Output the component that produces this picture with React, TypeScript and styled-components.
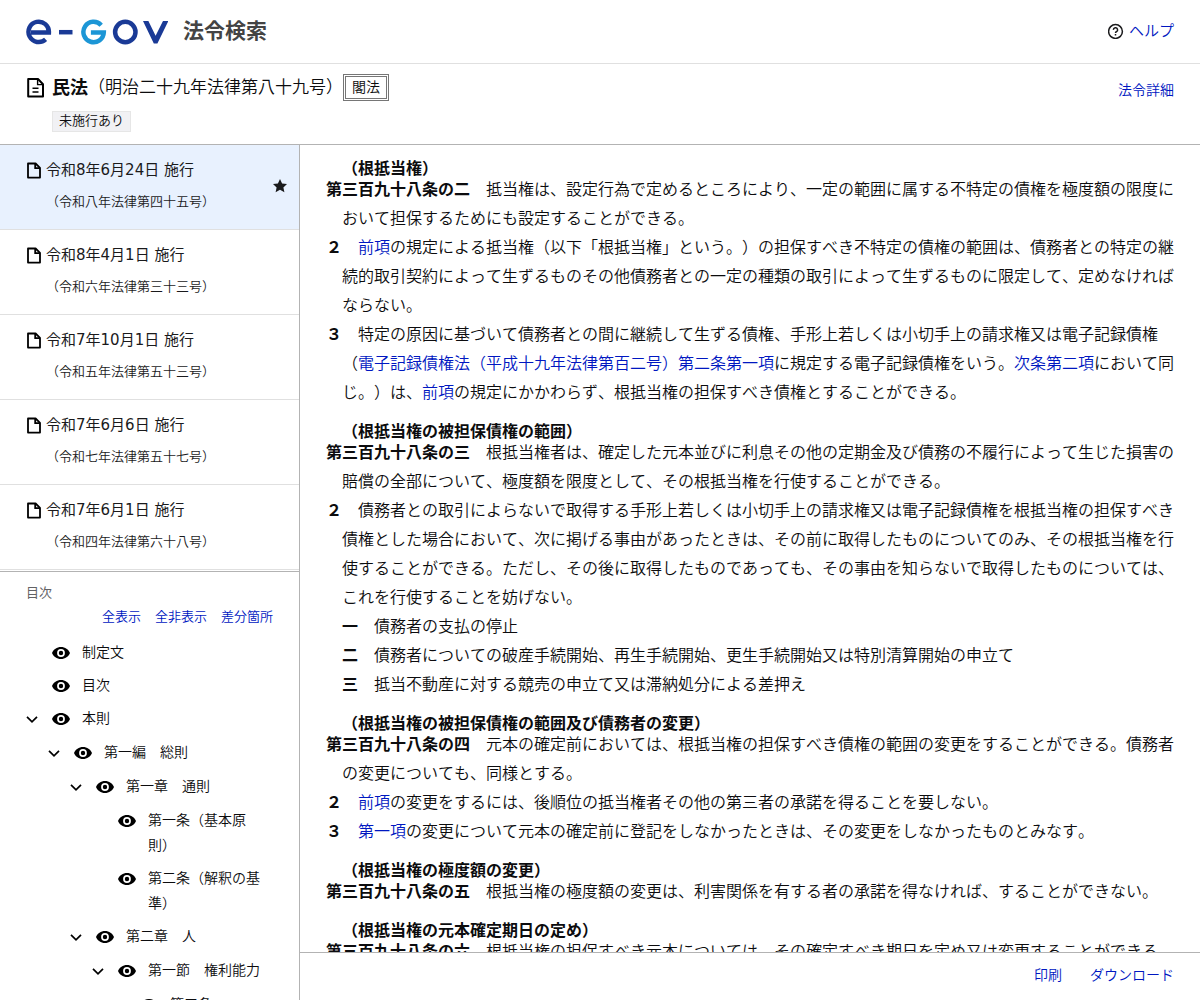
import React from "react";
import styled, { createGlobalStyle, css } from "styled-components";

const GlobalStyle = createGlobalStyle`
  *, *::before, *::after { box-sizing: border-box; }
  body {
    margin: 0;
    background: #fff;
    color: #0c0c0e;
    font-family: "DejaVu Sans", "Noto Sans CJK JP", sans-serif;
    font-size: 16px;
    font-weight: 350;
    font-kerning: none;
    text-spacing-trim: space-all;
  }
  h1, h2, h3, p, ul, ol { margin: 0; padding: 0; font-size: inherit; }
  ul, ol { list-style: none; }
  b { font-weight: 700; }
`;

const link = css`
  color: #0017c1;
  text-decoration: none;
`;

const Page = styled.div`
  display: flex;
  flex-direction: column;
  height: 100vh;
`;

const SiteHeader = styled.header`
  display: flex;
  align-items: center;
  justify-content: space-between;
  height: 64px;
  padding: 0 26px;
  border-bottom: 1px solid #e0e0e0;
`;

const Brand = styled.a`
  display: flex;
  align-items: center;
  gap: 15px;
  color: #444;
  font-size: 21px;
  font-weight: 700;
  line-height: 26px;
  text-decoration: none;
`;

const BrandText = styled.span`
  padding-bottom: 2px;
`;

const HelpLink = styled.a`
  ${link}
  display: flex;
  align-items: center;
  gap: 5px;
  padding-bottom: 2px;
  font-size: 15px;
  line-height: 24px;
`;

const LawBar = styled.section`
  display: flex;
  justify-content: space-between;
  align-items: flex-start;
  padding: 10px 26px 12px;
  border-bottom: 1px solid #b3b3b3;
`;

const LawTitle = styled.div`
  display: grid;
  grid-template-columns: 20px auto;
  column-gap: 6px;
  row-gap: 10px;
  align-items: center;
`;

const TitleLine = styled.div`
  display: flex;
  align-items: center;
  line-height: 27px;
  font-size: 17px;
`;

const LawName = styled.h1`
  font-size: 18px;
  font-weight: 700;
`;

const KindBadge = styled.span`
  padding: 0 6px;
  border: 3px double #767676;
  font-size: 14px;
  line-height: 21px;
`;

const Tag = styled.span`
  grid-column: 2;
  justify-self: start;
  padding: 0 6px 2px;
  border: 1px solid #e6e6e6;
  background: #f1f1f4;
  font-size: 13px;
  line-height: 17px;
`;

const TextLink = styled.a`
  ${link}
  font-size: 14px;
  line-height: 32px;
`;

const Body = styled.div`
  display: grid;
  grid-template-columns: 300px 1fr;
  flex: 1;
  min-height: 0;
`;

const Sidebar = styled.aside`
  display: flex;
  flex-direction: column;
  min-height: 0;
  border-right: 1px solid #b3b3b3;
`;

const Revisions = styled.ul`
  flex: none;
  padding-bottom: 1px;
  border-bottom: 1px solid #b3b3b3;
`;

const RevisionItem = styled.li<{ $current?: boolean }>`
  display: flex;
  align-items: center;
  justify-content: space-between;
  padding: 10px 12px 12px 26px;
  border-bottom: 1px solid #e0e0e0;
  background: ${(p) => (p.$current ? "#e8f1fe" : "#fff")};
`;

const RevisionLink = styled.a`
  display: grid;
  grid-template-columns: 16px auto;
  column-gap: 4px;
  row-gap: 2px;
  align-items: center;
  color: #1a1a1c;
  line-height: 30px;
  text-decoration: none;
`;

const RevisionDate = styled.span`
  font-size: 15px;
  font-weight: 400;
`;

const RevisionLaw = styled.span`
  grid-column: 2;
  font-size: 13px;
`;

const Toc = styled.nav`
  flex: 1;
  min-height: 0;
  padding: 9px 26px 0;
  overflow: hidden;
`;

const TocTitle = styled.h2`
  color: #626264;
  font-size: 13px;
  font-weight: 400;
  line-height: 24px;
`;

const TocActions = styled.div`
  display: flex;
  justify-content: flex-end;
  gap: 14px;
  margin-bottom: 7px;
`;

const TocButton = styled.button`
  ${link}
  padding: 0;
  border: 0;
  background: none;
  font-family: inherit;
  font-size: 13px;
  font-weight: inherit;
  line-height: 24px;
`;

const TocList = styled.ul`
  & & {
    padding-left: 22px;
    padding-top: 1px;
  }
`;

const TocRow = styled.div`
  display: grid;
  grid-template-columns: 12px 20px 1fr;
  column-gap: 12px;
  padding: 4px 0;
  font-size: 14px;
  line-height: 25px;
`;

const IconButton = styled.button`
  display: flex;
  align-items: center;
  justify-content: flex-end;
  height: 25px;
  padding: 0;
  border: 0;
  background: none;
  color: #000;
`;

const TocText = styled.a`
  color: inherit;
  text-decoration: none;
`;

const Content = styled.main`
  display: flex;
  flex-direction: column;
  min-width: 0;
  min-height: 0;
`;

const Articles = styled.div`
  flex: 1;
  min-height: 0;
  padding: 14px 24px 0 26px;
  overflow: hidden;
`;

const Article = styled.article`
  margin-bottom: 15px;
  line-height: 29px;
`;

const Caption = styled.h3`
  margin-bottom: -4px;
  padding-left: 16px;
  font-weight: 700;
  line-height: 20px;
`;

const Paragraph = styled.p<{ $item?: boolean }>`
  padding-left: ${(p) => (p.$item ? 32 : 16)}px;
  text-indent: -16px;
`;

const RefLink = styled.a`
  ${link}
`;

const Footer = styled.footer`
  display: flex;
  justify-content: flex-end;
  align-items: flex-start;
  gap: 28px;
  height: 48px;
  padding: 7px 26px;
  border-top: 1px solid #b3b3b3;
`;

const FooterButton = styled.button`
  ${link}
  padding: 0;
  border: 0;
  background: none;
  font-family: inherit;
  font-size: 14px;
  font-weight: inherit;
  line-height: 30px;
`;

const Logo = () => (
  <svg width="142" height="26" viewBox="0 0 142 26" fill="none" strokeWidth="4.5" role="img" aria-label="e-Gov">
    <path d="M5 13.4H22.9A10.2 10.2 0 1 0 19.6 20.4" stroke="#1a3a96" />
    <path d="M33 13.2H46.5" stroke="#1a3a96" />
    <path d="M74.8 6.2A10.2 10.2 0 1 0 77.4 13.4H64.5" stroke="#1c96d6" transform="translate(.4 0)" />
    <circle cx="99.3" cy="13" r="10.2" stroke="#1a3a96" />
    <path fill="#1a3a96" d="M117 2H122.4L129.6 16.8L137 2H142.4L131.4 24.4H127.8Z" />
  </svg>
);

const HelpIcon = () => (
  <svg width="16" height="16" viewBox="0 0 16 16" fill="none" stroke="#1a1a1c" strokeWidth="1.5" aria-hidden="true">
    <circle cx="7.5" cy="8.5" r="6.9" />
    <path d="M5.4 6.9A2.1 2.1 0 1 1 8.4 8.7C7.7 9.1 7.5 9.3 7.5 10" />
    <path d="M7.5 11V12.5" />
  </svg>
);

const LawIcon = () => (
  <svg width="20" height="22" viewBox="0 0 20 22" fill="none" stroke="#000" strokeWidth="2" aria-hidden="true">
    <path d="M2.2 2H12L17 7.2V19.6H2.2Z" strokeLinejoin="round" />
    <path d="M11.6 2V7.6H17" strokeWidth="1.4" />
    <path d="M6.5 11.3H12.5M6.5 15H12.5" strokeWidth="1.5" />
  </svg>
);

const FileIcon = () => (
  <svg width="16" height="18" viewBox="0 0 16 18" fill="none" stroke="#000" strokeWidth="1.8" aria-hidden="true">
    <path d="M2 2.5H9.6L14 6.9V16.6H2Z" strokeLinejoin="round" />
    <path d="M9.2 2.5V7.2H14" />
  </svg>
);

const StarIcon = () => (
  <svg width="14" height="14" viewBox="0 0 14 14" fill="#1a1a1c" role="img" aria-label="選択中">
    <path d="M7 0L9.1 4.6L14 5.1L10.4 8.4L11.4 13.3L7 10.8L2.6 13.3L3.6 8.4L0 5.1L4.9 4.6Z" />
  </svg>
);

const EyeIcon = () => (
  <svg width="18" height="12" viewBox="0 0 18 12" aria-hidden="true">
    <path
      fill="#000"
      fillRule="evenodd"
      d="M9 0C4.9 0 1.4 2.5 0 6C1.4 9.5 4.9 12 9 12S16.6 9.5 18 6C16.6 2.5 13.1 0 9 0ZM9 9.9A3.9 3.9 0 1 1 9 2.1A3.9 3.9 0 0 1 9 9.9ZM9 3.8A2.2 2.2 0 1 0 9 8.2A2.2 2.2 0 0 0 9 3.8Z"
    />
  </svg>
);

const ChevronIcon = () => (
  <svg width="12" height="8" viewBox="0 0 12 8" fill="none" stroke="#000" strokeWidth="1.7" aria-hidden="true">
    <path d="M1 1.8L6 6.8L11 1.8" />
  </svg>
);

const revisions = [
  { date: "令和8年6月24日 施行", law: "（令和八年法律第四十五号）", current: true },
  { date: "令和8年4月1日 施行", law: "（令和六年法律第三十三号）" },
  { date: "令和7年10月1日 施行", law: "（令和五年法律第五十三号）" },
  { date: "令和7年6月6日 施行", law: "（令和七年法律第五十七号）" },
  { date: "令和7年6月1日 施行", law: "（令和四年法律第六十八号）" },
];

type Node = { label: string; children?: Node[] };

const toc: Node[] = [
  { label: "制定文" },
  { label: "目次" },
  {
    label: "本則",
    children: [
      {
        label: "第一編　総則",
        children: [
          {
            label: "第一章　通則",
            children: [{ label: "第一条（基本原則）" }, { label: "第二条（解釈の基準）" }],
          },
          {
            label: "第二章　人",
            children: [{ label: "第一節　権利能力", children: [{ label: "第三条" }] }],
          },
        ],
      },
    ],
  },
];

const TocTree = ({ nodes }: { nodes: Node[] }) => (
  <TocList>
    {nodes.map((n) => (
      <li key={n.label}>
        <TocRow>
          {n.children ? (
            <IconButton type="button" aria-label={n.label + "を閉じる"} aria-expanded="true">
              <ChevronIcon />
            </IconButton>
          ) : (
            <span />
          )}
          <IconButton type="button" aria-label={n.label + "の表示切替"}>
            <EyeIcon />
          </IconButton>
          <TocText href="#">{n.label}</TocText>
        </TocRow>
        {n.children && <TocTree nodes={n.children} />}
      </li>
    ))}
  </TocList>
);

const Ref = ({ children }: { children: React.ReactNode }) => <RefLink href="#">{children}</RefLink>;

export default function App() {
  return (
    <Page>
      <GlobalStyle />
      <SiteHeader>
        <Brand href="#">
          <Logo />
          <BrandText>法令検索</BrandText>
        </Brand>
        <HelpLink href="#">
          <HelpIcon />
          ヘルプ
        </HelpLink>
      </SiteHeader>
      <LawBar>
        <LawTitle>
          <LawIcon />
          <TitleLine>
            <LawName>民法</LawName>
            <span>（明治二十九年法律第八十九号）</span>
            <KindBadge>閣法</KindBadge>
          </TitleLine>
          <Tag>未施行あり</Tag>
        </LawTitle>
        <TextLink href="#">法令詳細</TextLink>
      </LawBar>
      <Body>
        <Sidebar>
          <Revisions>
            {revisions.map((r) => (
              <RevisionItem key={r.date} $current={r.current}>
                <RevisionLink href="#">
                  <FileIcon />
                  <RevisionDate>{r.date}</RevisionDate>
                  <RevisionLaw>{r.law}</RevisionLaw>
                </RevisionLink>
                {r.current && <StarIcon />}
              </RevisionItem>
            ))}
          </Revisions>
          <Toc aria-label="目次">
            <TocTitle>目次</TocTitle>
            <TocActions>
              <TocButton type="button">全表示</TocButton>
              <TocButton type="button">全非表示</TocButton>
              <TocButton type="button">差分箇所</TocButton>
            </TocActions>
            <TocTree nodes={toc} />
          </Toc>
        </Sidebar>
        <Content>
          <Articles>
            <Article>
              <Caption>（根抵当権）</Caption>
              <Paragraph>
                <b>第三百九十八条の二</b>　抵当権は、設定行為で定めるところにより、一定の範囲に属する不特定の債権を極度額の限度において担保するためにも設定することができる。
              </Paragraph>
              <Paragraph>
                <b>２</b>　<Ref>前項</Ref>の規定による抵当権（以下「根抵当権」という。）の担保すべき不特定の債権の範囲は、債務者との特定の継続的取引契約によって生ずるものその他債務者との一定の種類の取引によって生ずるものに限定して、定めなければならない。
              </Paragraph>
              <Paragraph>
                <b>３</b>　特定の原因に基づいて債務者との間に継続して生ずる債権、手形上若しくは小切手上の請求権又は電子記録債権（<Ref>電子記録債権法（平成十九年法律第百二号）第二条第一項</Ref>に規定する電子記録債権をいう。<Ref>次条第二項</Ref>において同じ。）は、<Ref>前項</Ref>の規定にかかわらず、根抵当権の担保すべき債権とすることができる。
              </Paragraph>
            </Article>
            <Article>
              <Caption>（根抵当権の被担保債権の範囲）</Caption>
              <Paragraph>
                <b>第三百九十八条の三</b>　根抵当権者は、確定した元本並びに利息その他の定期金及び債務の不履行によって生じた損害の賠償の全部について、極度額を限度として、その根抵当権を行使することができる。
              </Paragraph>
              <Paragraph>
                <b>２</b>　債務者との取引によらないで取得する手形上若しくは小切手上の請求権又は電子記録債権を根抵当権の担保すべき債権とした場合において、次に掲げる事由があったときは、その前に取得したものについてのみ、その根抵当権を行使することができる。ただし、その後に取得したものであっても、その事由を知らないで取得したものについては、これを行使することを妨げない。
              </Paragraph>
              <Paragraph $item><b>一</b>　債務者の支払の停止</Paragraph>
              <Paragraph $item><b>二</b>　債務者についての破産手続開始、再生手続開始、更生手続開始又は特別清算開始の申立て</Paragraph>
              <Paragraph $item><b>三</b>　抵当不動産に対する競売の申立て又は滞納処分による差押え</Paragraph>
            </Article>
            <Article>
              <Caption>（根抵当権の被担保債権の範囲及び債務者の変更）</Caption>
              <Paragraph>
                <b>第三百九十八条の四</b>　元本の確定前においては、根抵当権の担保すべき債権の範囲の変更をすることができる。債務者の変更についても、同様とする。
              </Paragraph>
              <Paragraph>
                <b>２</b>　<Ref>前項</Ref>の変更をするには、後順位の抵当権者その他の第三者の承諾を得ることを要しない。
              </Paragraph>
              <Paragraph>
                <b>３</b>　<Ref>第一項</Ref>の変更について元本の確定前に登記をしなかったときは、その変更をしなかったものとみなす。
              </Paragraph>
            </Article>
            <Article>
              <Caption>（根抵当権の極度額の変更）</Caption>
              <Paragraph>
                <b>第三百九十八条の五</b>　根抵当権の極度額の変更は、利害関係を有する者の承諾を得なければ、することができない。
              </Paragraph>
            </Article>
            <Article>
              <Caption>（根抵当権の元本確定期日の定め）</Caption>
              <Paragraph>
                <b>第三百九十八条の六</b>　根抵当権の担保すべき元本については、その確定すべき期日を定め又は変更することができる。
              </Paragraph>
            </Article>
          </Articles>
          <Footer>
            <FooterButton type="button">印刷</FooterButton>
            <FooterButton type="button">ダウンロード</FooterButton>
          </Footer>
        </Content>
      </Body>
    </Page>
  );
}
